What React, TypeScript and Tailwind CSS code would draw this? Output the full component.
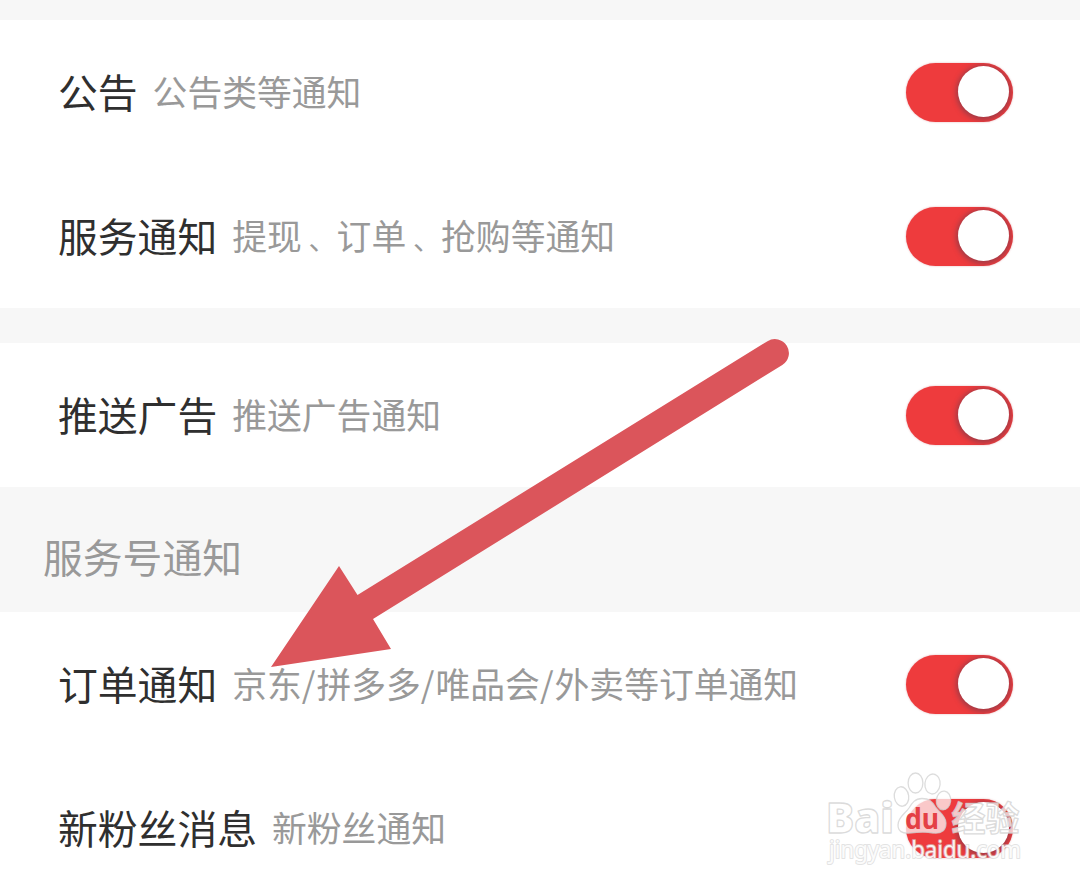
import { useState } from 'react';

interface Item {
  id: string;
  label: string;
  hint: string;
}

interface Section {
  title?: string;
  items: Item[];
}

const sections: Section[] = [
  {
    items: [
      { id: 'announcement', label: '公告', hint: '公告类等通知' },
      { id: 'service', label: '服务通知', hint: '提现、订单、抢购等通知' },
    ],
  },
  {
    items: [{ id: 'ads', label: '推送广告', hint: '推送广告通知' }],
  },
  {
    title: '服务号通知',
    items: [
      { id: 'orders', label: '订单通知', hint: '京东/拼多多/唯品会/外卖等订单通知' },
      { id: 'fans', label: '新粉丝消息', hint: '新粉丝通知' },
    ],
  },
];

const Toggle = ({ label, on, onChange }: { label: string; on: boolean; onChange: () => void }) => (
  <button
    type="button"
    role="switch"
    aria-checked={on}
    aria-label={label}
    onClick={onChange}
    className={`flex h-[59px] w-[107px] items-center overflow-hidden rounded-full px-1 ${
      on ? 'justify-end bg-[#ee3b3d]' : 'justify-start bg-gray-300'
    } shadow-[0_0_2px_rgba(190,60,70,0.45)]`}
  >
    <span className="mb-px size-[51px] rounded-full bg-white shadow-[0_1px_5px_2px_rgba(90,60,80,0.5)]" />
  </button>
);

// Separators sit a little wider than the font sets them
const Hint = ({ text }: { text: string }) => (
  <span className="text-[34.8px] leading-none text-[#999999]">
    {text.split(/([、/])/).map((part, i) => {
      if (part === '、') return <span key={i} className="ml-[6.8px] text-[28px]">{part}</span>;
      if (part === '/') return <span key={i} className="tracking-[1px]">{part}</span>;
      return part;
    })}
  </span>
);

const Row = ({ item, on, onChange }: { item: Item; on: boolean; onChange: () => void }) => (
  <div className="flex h-36 shrink-0 items-center justify-between bg-white pr-[67.5px] pl-[58px]">
    <div className="mb-0.5 flex items-center gap-[15px] whitespace-nowrap">
      <span className="text-[39.8px] leading-none text-[#2f2f2f]">{item.label}</span>
      <Hint text={item.hint} />
    </div>
    <Toggle label={item.label} on={on} onChange={onChange} />
  </div>
);

const Arrow = () => (
  <svg className="pointer-events-none absolute top-0 left-0" width="1080" height="888" viewBox="0 0 1080 888">
    <path
      d="M271 667 L339 566 L357.5 595 L767.5 341.2 A14 14 0 0 1 782.3 365 L373 619 L391 649 Z"
      fill="#db555b"
    />
  </svg>
);

const Watermark = () => (
  <svg
    className="pointer-events-none absolute top-[764px] left-[820px]"
    width="210"
    height="110"
    viewBox="820 764 210 110"
    fill="#ffffff"
    fillOpacity="0.72"
    stroke="#d0d0d0"
    strokeOpacity="0.75"
    strokeWidth="1.3"
    strokeLinejoin="round"
  >
    <text
      x="826"
      y="832.5"
      fontSize="43"
      fontWeight="800"
      fontFamily="'Open Sans', 'Noto Sans', sans-serif"
      textLength="68"
      lengthAdjust="spacingAndGlyphs"
    >
      Bai
    </text>
    <ellipse cx="901.5" cy="796.5" rx="7.2" ry="9.8" transform="rotate(-8 901.5 796.5)" />
    <ellipse cx="915.5" cy="783" rx="7.4" ry="10" />
    <ellipse cx="932.5" cy="784" rx="7.6" ry="10" transform="rotate(6 932.5 784)" />
    <ellipse cx="943.5" cy="800.5" rx="7.2" ry="9.4" transform="rotate(6 943.5 800.5)" />
    <path d="M922 798.5 C915 798.5 912 803 909 808 C905 814 898 817 898 825 C898 831 902 834 910 833 C918 832 928 832 933 833 C942 834 946 830 946 823 C946 816 939 812 935.5 807 C932 801 929 798.5 922 798.5 Z" />
    <text
      x="905"
      y="828.5"
      fontSize="28"
      fontWeight="700"
      fontFamily="'Noto Sans', sans-serif"
      fill="#e44045"
      fillOpacity="1"
      stroke="none"
      textLength="34"
      lengthAdjust="spacingAndGlyphs"
    >
      du
    </text>
    <text
      x="951.5"
      y="830.5"
      fontSize="34"
      fontWeight="700"
      fontFamily="'Noto Sans CJK SC', sans-serif"
      textLength="68"
      lengthAdjust="spacingAndGlyphs"
    >
      经验
    </text>
    <text
      x="829"
      y="858"
      fontSize="23"
      fontWeight="400"
      fontFamily="'Noto Sans', sans-serif"
      paintOrder="stroke"
      strokeWidth="2"
      strokeOpacity="0.6"
      fillOpacity="0.9"
      textLength="192"
      lengthAdjust="spacingAndGlyphs"
    >
      jingyan.baidu.com
    </text>
  </svg>
);

const App = () => {
  const [disabled, setDisabled] = useState<string[]>([]);

  const toggle = (id: string) => {
    setDisabled((prev) => (prev.includes(id) ? prev.filter((x) => x !== id) : [...prev, id]));
  };

  return (
    <div className="relative flex h-[888px] w-[1080px] flex-col overflow-hidden bg-[#f7f7f7] pt-5 font-['Noto_Sans_CJK_SC',sans-serif]">
      {sections.map((section, index) => (
        <section key={section.items[0].id} className="shrink-0">
          {section.title ? (
            <h2 className="flex h-[125px] items-center pt-3 pl-[43px] text-[39.8px] leading-none text-[#999999]">
              {section.title}
            </h2>
          ) : (
            index > 0 && <div className="h-[35px]" />
          )}
          {section.items.map((item) => (
            <Row key={item.id} item={item} on={!disabled.includes(item.id)} onChange={() => toggle(item.id)} />
          ))}
        </section>
      ))}
      <Arrow />
      <Watermark />
    </div>
  );
};

export default App;
